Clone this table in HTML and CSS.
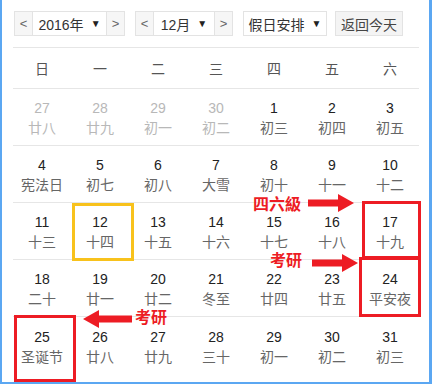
FILE: index.html
```html
<!DOCTYPE html>
<html lang="zh-CN">
<head>
  <meta charset="UTF-8" />
  <title>万年历</title>
  <link rel="stylesheet" href="styles.css">
</head>
<body>
  <div class="frame">
    <div class="toolbar">
      <div class="group">
        <span class="btn arrow">&lt;</span>
        <span class="btn select year">2016年 <i>▼</i></span>
        <span class="btn arrow">&gt;</span>
      </div>
      <div class="group">
        <span class="btn arrow">&lt;</span>
        <span class="btn select month">12月 <i>▼</i></span>
        <span class="btn arrow">&gt;</span>
      </div>
      <span class="btn select holiday">假日安排 <i>▼</i></span>
      <span class="btn today-btn">返回今天</span>
    </div>

    <div class="week">
      <span>日</span><span>一</span><span>二</span><span>三</span><span>四</span><span>五</span><span>六</span>
    </div>

    <div class="days">
      <div class="day other"><b>27</b><em>廿八</em></div>
      <div class="day other"><b>28</b><em>廿九</em></div>
      <div class="day other"><b>29</b><em>初一</em></div>
      <div class="day other"><b>30</b><em>初二</em></div>
      <div class="day"><b>1</b><em>初三</em></div>
      <div class="day"><b>2</b><em>初四</em></div>
      <div class="day"><b>3</b><em>初五</em></div>

      <div class="day"><b>4</b><em>宪法日</em></div>
      <div class="day"><b>5</b><em>初七</em></div>
      <div class="day"><b>6</b><em>初八</em></div>
      <div class="day"><b>7</b><em>大雪</em></div>
      <div class="day"><b>8</b><em>初十</em></div>
      <div class="day"><b>9</b><em>十一</em></div>
      <div class="day"><b>10</b><em>十二</em></div>

      <div class="day"><b>11</b><em>十三</em></div>
      <div class="day"><b>12</b><em>十四</em></div>
      <div class="day"><b>13</b><em>十五</em></div>
      <div class="day"><b>14</b><em>十六</em></div>
      <div class="day"><b>15</b><em>十七</em></div>
      <div class="day"><b>16</b><em>十八</em></div>
      <div class="day"><b>17</b><em>十九</em></div>

      <div class="day"><b>18</b><em>二十</em></div>
      <div class="day"><b>19</b><em>廿一</em></div>
      <div class="day"><b>20</b><em>廿二</em></div>
      <div class="day"><b>21</b><em>冬至</em></div>
      <div class="day"><b>22</b><em>廿四</em></div>
      <div class="day"><b>23</b><em>廿五</em></div>
      <div class="day"><b>24</b><em>平安夜</em></div>

      <div class="day last"><b>25</b><em>圣诞节</em></div>
      <div class="day last"><b>26</b><em>廿八</em></div>
      <div class="day last"><b>27</b><em>廿九</em></div>
      <div class="day last"><b>28</b><em>三十</em></div>
      <div class="day last"><b>29</b><em>初一</em></div>
      <div class="day last"><b>30</b><em>初二</em></div>
      <div class="day last"><b>31</b><em>初三</em></div>
    </div>

    <!-- today marker -->
    <div class="today-box"></div>

    <!-- hand-drawn notes on top of the calendar -->
    <div class="mark box-17"></div>
    <div class="mark box-24"></div>
    <div class="mark box-25"></div>

    <span class="note note-cet">四六級</span>
    <svg class="arrow-svg arrow-cet" width="46" height="18" viewBox="0 0 46 18">
      <path d="M0 5.5 H30 V0 L46 9 L30 18 V12.5 H0 Z" fill="#ed1c24"/>
    </svg>

    <span class="note note-ky1">考研</span>
    <svg class="arrow-svg arrow-ky1" width="46" height="18" viewBox="0 0 46 18">
      <path d="M0 5.5 H30 V0 L46 9 L30 18 V12.5 H0 Z" fill="#ed1c24"/>
    </svg>

    <svg class="arrow-svg arrow-ky2" width="49" height="18" viewBox="0 0 49 18">
      <path d="M49 5.5 H16 V0 L0 9 L16 18 V12.5 H49 Z" fill="#ed1c24"/>
    </svg>
    <span class="note note-ky2">考研</span>
  </div>
</body>
</html>
```

FILE: styles.css
```css
body {
  margin: 0;
  background: #fff;
  font-family: "Liberation Sans", "Noto Sans CJK SC", sans-serif;
  color: #333;
}

.frame {
  position: relative;
  box-sizing: border-box;
  width: 432px;
  height: 384px;
  border-left: 2px solid #5ba7f2;
  border-right: 3px solid #5ba7f2;
  border-bottom: 2px solid #5ba7f2;
  padding: 11px 10px 0 11px;
  overflow: hidden;
}

/* top controls */
.toolbar {
  display: flex;
  align-items: center;
  gap: 8px;
  padding: 0 0 11px 1px;
  border-bottom: 1px solid #e6e6e6;
}

.group {
  display: flex;
  margin-right: 2px;
}

.btn {
  box-sizing: border-box;
  height: 25px;
  display: flex;
  align-items: center;
  justify-content: center;
  border: 1px solid #e3e3e3;
  font-size: 14px;
  color: #333;
  white-space: nowrap;
}

.btn i {
  font-style: normal;
  font-size: 10px;
  margin-left: 7px;
  color: #222;
}

.arrow {
  width: 19px;
  background: #f6f6f6;
  color: #666;
  font-size: 13px;
}

.group .select {
  border-left: none;
  border-right: none;
  background: #fff;
}

.year { width: 73px; }
.month { width: 60px; }

.holiday {
  width: 84px;
  background: #fff;
}

.today-btn {
  width: 68px;
  background: #f4f4f4;
  color: #444;
}

/* weekday header */
.week {
  display: grid;
  grid-template-columns: repeat(7, 58px);
  height: 40px;
  align-items: center;
  border-bottom: 1px solid #e6e6e6;
  font-size: 14px;
  color: #555;
}

.week span {
  text-align: center;
}

/* day cells */
.days {
  display: grid;
  grid-template-columns: repeat(7, 58px);
}

.day {
  height: 56px;
  border-bottom: 1px solid #e6e6e6;
  display: flex;
  flex-direction: column;
  align-items: center;
  justify-content: center;
  gap: 4px;
  font-size: 14px;
  line-height: 16px;
  padding-top: 2px;
  box-sizing: border-box;
  height: 57px;
}

.day.last {
  border-bottom: none;
}

.day b {
  font-weight: normal;
  color: #222;
}

.day em {
  font-style: normal;
  color: #666;
}

.day.other b,
.day.other em {
  color: #b8b8b8;
}

.today-box {
  position: absolute;
  left: 70px;
  top: 203px;
  width: 62px;
  height: 58px;
  box-sizing: border-box;
  border: 3px solid #f8c21c;
}

/* red annotations */
.mark {
  position: absolute;
  box-sizing: border-box;
  border: 3px solid #ed1c24;
}

.box-17 { left: 360px; top: 201px; width: 59px; height: 58px; }
.box-24 { left: 357px; top: 257px; width: 62px; height: 60px; }
.box-25 { left: 12px; top: 315px; width: 62px; height: 67px; }

.note {
  position: absolute;
  font-family: "Liberation Sans", "Noto Sans CJK SC", sans-serif;
  font-weight: bold;
  font-size: 16px;
  line-height: 12px;
  color: #ed1c24;
}

.note-cet { left: 251px; top: 199px; }
.note-ky1 { left: 268px; top: 255px; }
.note-ky2 { left: 133px; top: 312px; }

.arrow-svg {
  position: absolute;
}

.arrow-cet { left: 306px; top: 194px; }
.arrow-ky1 { left: 310px; top: 254px; }
.arrow-ky2 { left: 81px; top: 310px; }
```
